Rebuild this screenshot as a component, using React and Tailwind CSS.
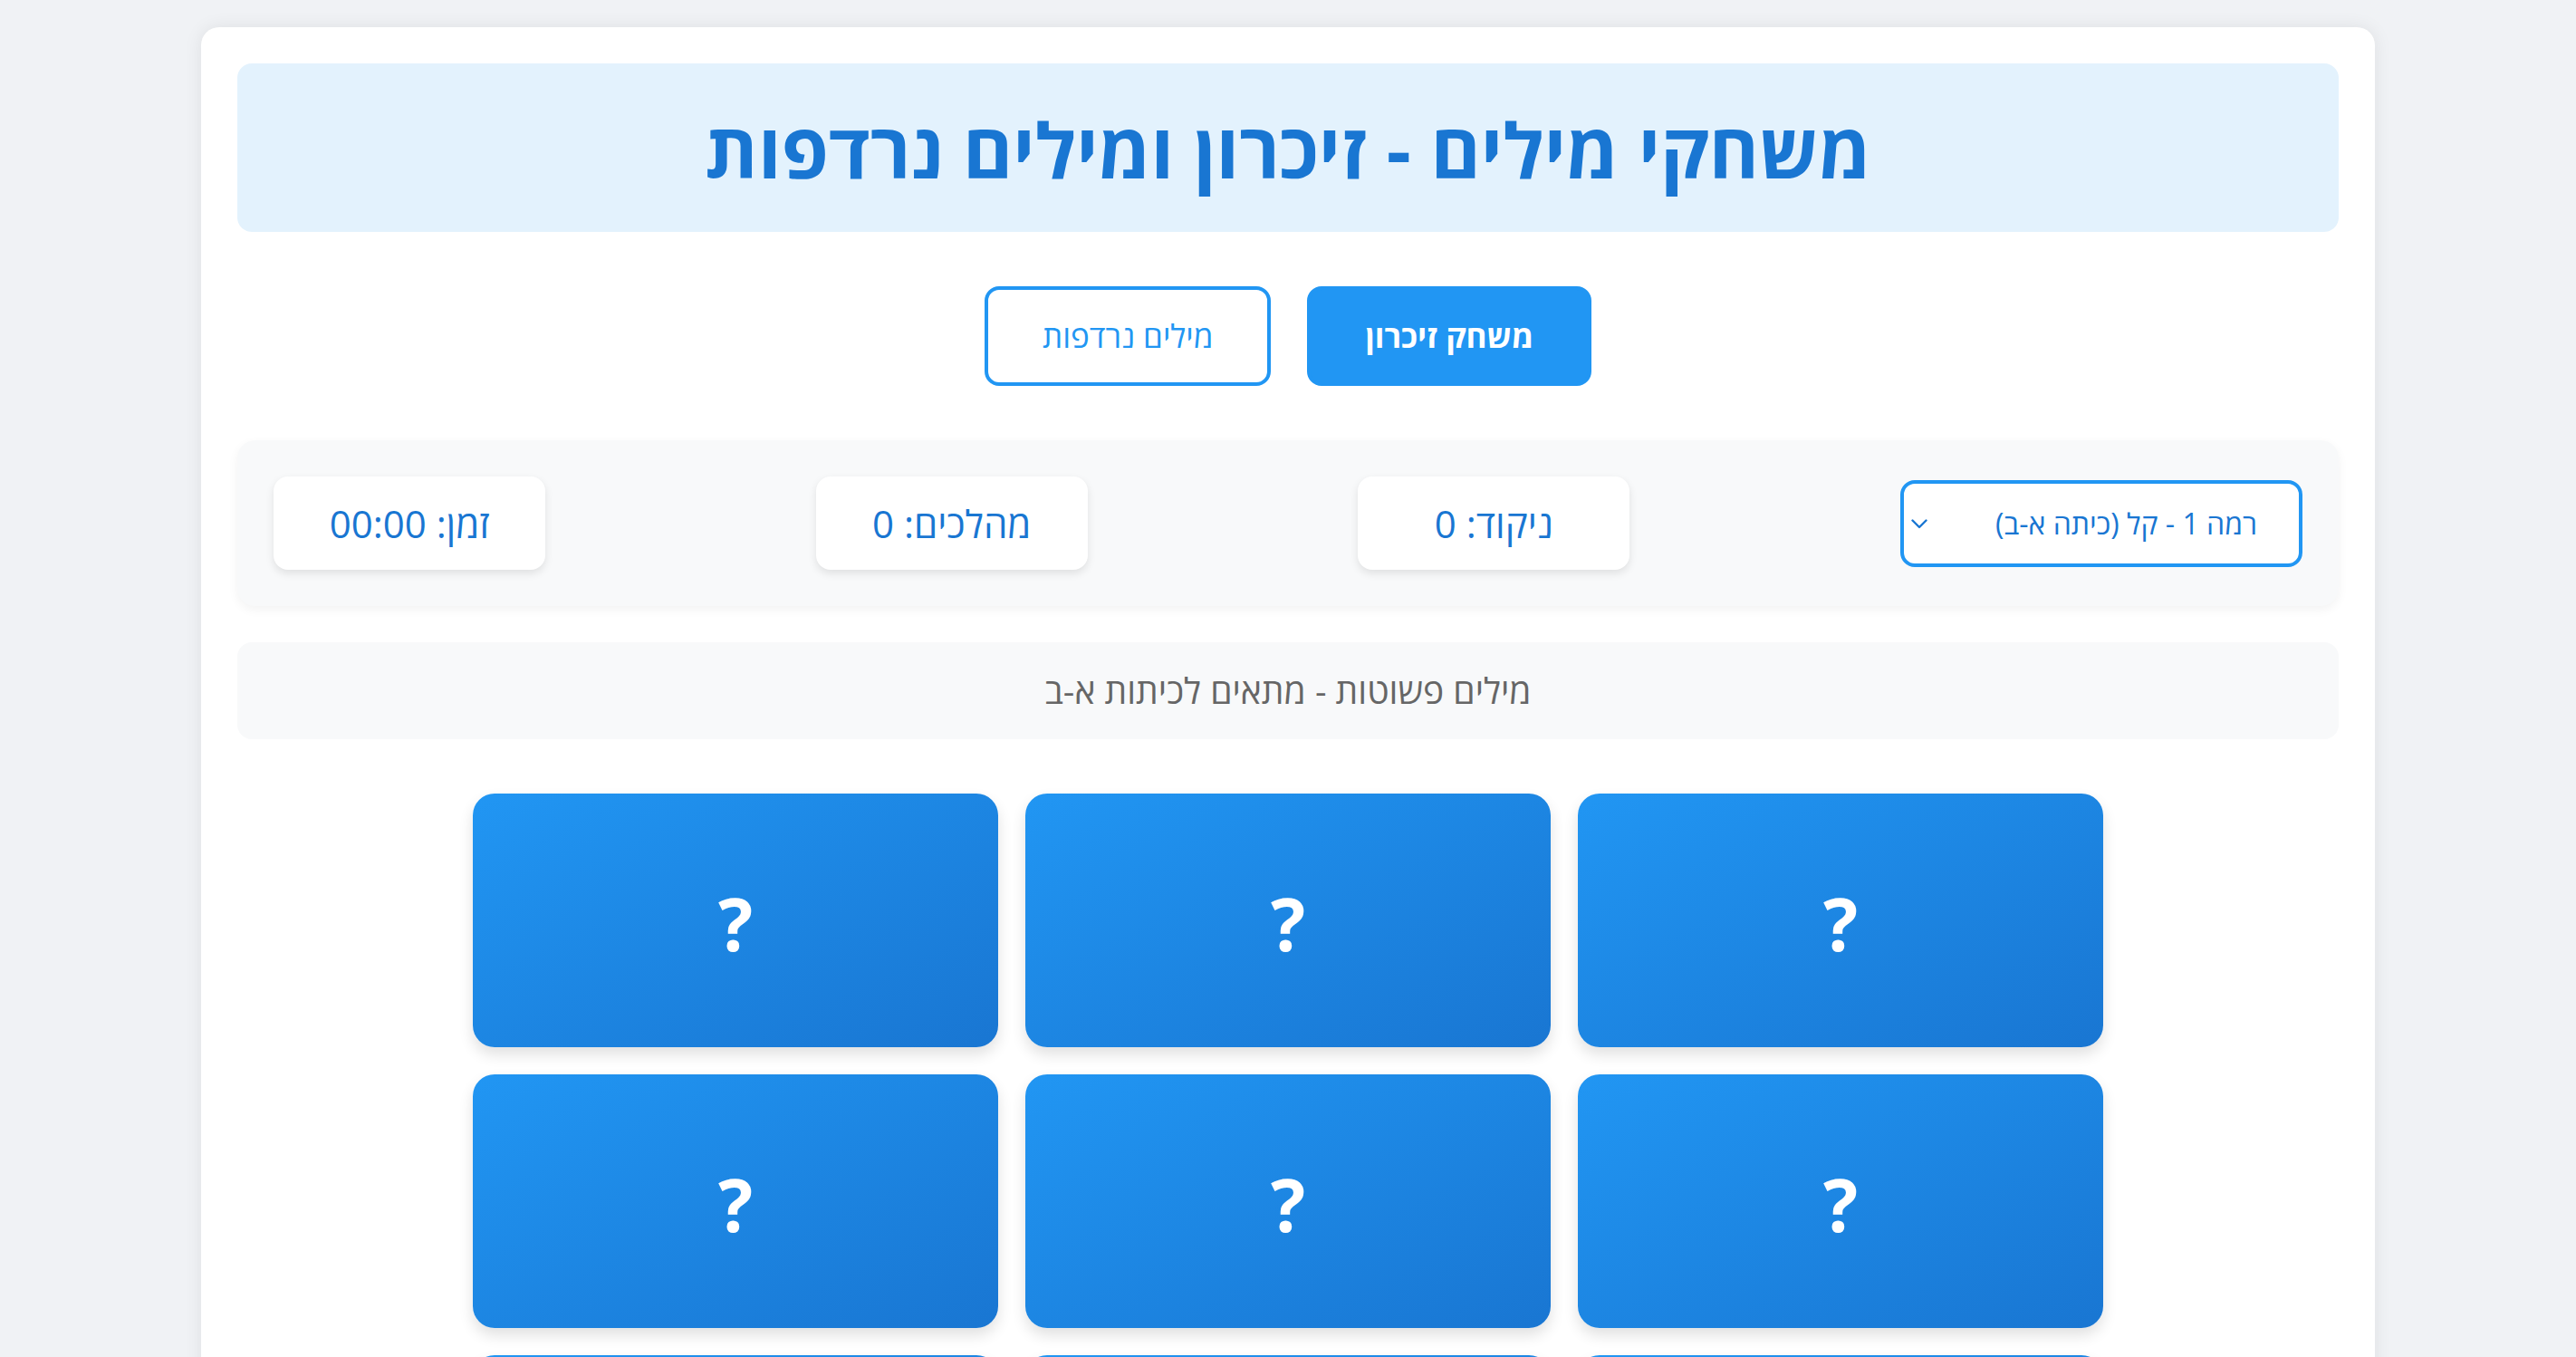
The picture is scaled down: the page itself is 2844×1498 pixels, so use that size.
import React from "react";

function StatBox({ children }) {
  return (
    <div className="w-[300px] h-[103px] bg-white rounded-[16px] shadow-[0_4px_10px_rgba(0,0,0,0.1)] flex items-center justify-center text-[42px] text-[#1976d2]">
      {children}
    </div>
  );
}

export default function App() {
  const cards = Array.from({ length: 9 });
  return (
    <div
      dir="rtl"
      className="h-[1498px] overflow-hidden bg-[#f0f2f5] pt-[30px] font-['Open_Sans','Noto_Sans','DejaVu_Sans',sans-serif]"
    >
      <div className="mx-auto max-w-[2400px] bg-white rounded-[20px] p-[40px] shadow-[0_0_20px_rgba(0,0,0,0.08)]">
        <div className="h-[186px] bg-[#e3f2fd] rounded-[16px] flex items-center justify-center">
          <h1 className="text-[84px] font-bold text-[#1976d2] leading-none mt-[4px]">
            משחקי מילים - זיכרון ומילים נרדפות
          </h1>
        </div>

        <div className="mt-[60px] flex justify-center gap-[40px]">
          <button className="h-[110px] px-[60px] border-4 border-[#2196f3] bg-[#2196f3] text-white font-bold text-[35px] rounded-[16px]">
            משחק זיכרון
          </button>
          <button className="h-[110px] px-[60px] border-4 border-[#2196f3] bg-white text-[#2196f3] text-[35px] rounded-[16px]">
            מילים נרדפות
          </button>
        </div>

        <div className="mt-[60px] bg-[#f8f9fa] rounded-[20px] p-[40px] flex items-center justify-between shadow-[0_4px_12px_rgba(0,0,0,0.05)]">
          <div className="w-[444px] h-[96px] border-4 border-[#2196f3] rounded-[16px] bg-white flex items-center justify-between pr-[46px] pl-[8px] text-[32px] text-[#1976d2]">
            <span>רמה 1 - קל (כיתה א-ב)</span>
            <svg width="18" height="11" viewBox="0 0 18 11" fill="none" className="mt-[2px]">
              <path d="M1.5 1.5 L9 9 L16.5 1.5" stroke="#1976d2" strokeWidth="2.4" strokeLinecap="round" strokeLinejoin="round" />
            </svg>
          </div>
          <StatBox>ניקוד: 0</StatBox>
          <StatBox>מהלכים: 0</StatBox>
          <StatBox>זמן: 00:00</StatBox>
        </div>

        <div className="mt-[40px] h-[107px] bg-[#f8f9fa] rounded-[16px] flex items-center justify-center text-[39px] text-[#666666]">
          מילים פשוטות - מתאים לכיתות א-ב
        </div>

        <div className="mt-[60px] mx-auto max-w-[1800px] grid grid-cols-3 gap-[30px]">
          {cards.map((_, i) => (
            <div
              key={i}
              className="h-[280px] rounded-[24px] bg-gradient-to-br from-[#2196f3] to-[#1976d2] shadow-[0_8px_16px_rgba(0,0,0,0.12)] flex items-center justify-center text-white font-bold text-[80px] pt-[6px]"
            >
              ?
            </div>
          ))}
        </div>
      </div>
    </div>
  );
}
